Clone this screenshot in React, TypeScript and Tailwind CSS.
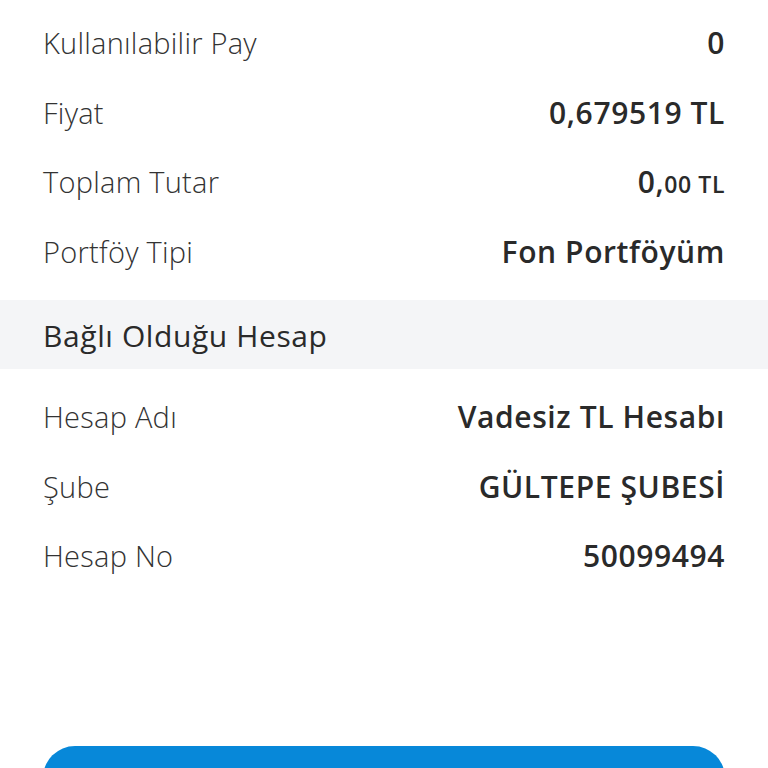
const FONT = "font-['Open_Sans',_'Noto_Sans',_sans-serif]"

const TOP_ROWS = [
  { label: 'Kullanılabilir Pay', value: <>0</> },
  { label: 'Fiyat', value: <>0,679519 TL</> },
  {
    label: 'Toplam Tutar',
    value: (
      <>
        0,<span className="text-[23px]">00 TL</span>
      </>
    ),
  },
  { label: 'Portföy Tipi', value: <>Fon Portföyüm</> },
]

const ACCOUNT_ROWS = [
  { label: 'Hesap Adı', value: 'Vadesiz TL Hesabı' },
  { label: 'Şube', value: 'GÜLTEPE ŞUBESİ' },
  { label: 'Hesap No', value: '50099494' },
]

function Row({ label, value }: { label: string; value: React.ReactNode }) {
  return (
    <div className="h-[69.5px] px-[43px] flex items-center justify-between">
      <span className="text-[29px] font-light tracking-[0.25px] text-[#333333]">{label}</span>
      <span className="text-[30px] font-semibold tracking-[0.6px] text-[#2a2a2a]">{value}</span>
    </div>
  )
}

export default function App() {
  return (
    <div className={`w-[768px] h-[768px] overflow-hidden bg-white ${FONT}`}>
      <div className="pt-[8px]">
        {TOP_ROWS.map((r) => (
          <Row key={r.label} label={r.label} value={r.value} />
        ))}
      </div>

      <div className="mt-[14px] h-[69px] bg-[#f4f5f7] px-[43px] flex items-center">
        <span className="text-[30px] tracking-[0.6px] text-[#2a2a2a] pt-[2px]">Bağlı Olduğu Hesap</span>
      </div>

      <div className="mt-[13px]">
        {ACCOUNT_ROWS.map((r) => (
          <Row key={r.label} label={r.label} value={r.value} />
        ))}
      </div>

      <div className="mt-[155px] px-[43px]">
        <button className="w-full h-[64px] rounded-[32px] bg-[#0788d9]" />
      </div>
    </div>
  )
}
